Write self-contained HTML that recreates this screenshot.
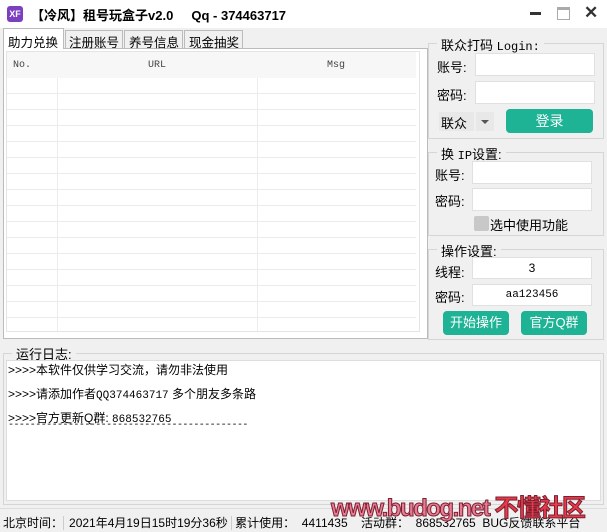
<!DOCTYPE html>
<html><head><meta charset="utf-8"><style>
*{margin:0;padding:0;box-sizing:border-box}
body{width:607px;height:532px;overflow:hidden;background:#f0f0f0;font-family:"Liberation Sans","Noto Sans CJK SC",sans-serif;font-size:12px;color:#000;position:relative}
.a{position:absolute}
.title{left:0;top:0;width:607px;height:28px;background:#fff}
.mono{font-family:"Liberation Mono","WenQuanYi Zen Hei",monospace}
.grp{border:1px solid #d5d5d5;position:absolute}
.leg{position:absolute;background:#f0f0f0;padding:0 4px;font-size:13px}
.inp{position:absolute;background:#fff;border:1px solid #e0e0e0}
.btn{position:absolute;background:#1db394;color:#fff;border-radius:4px;text-align:center;font-size:13px}
.lbl{position:absolute;font-size:13px}
.tab{position:absolute;top:30px;height:19px;background:#f0f0f0;border:1px solid #bbb;font-size:12.5px;padding:1px 0 0 3px;white-space:nowrap}
</style></head><body>
<div class="a title"></div>
<div class="a" style="left:7px;top:6px;width:16px;height:16px;background:#7b3fbf;border-radius:3px;color:#fff;font-size:9px;font-weight:bold;line-height:16px;text-align:center">XF</div>
<div class="a" style="left:31px;top:5px;font-size:13px;font-weight:bold">【冷风】租号玩盒子v2.0&nbsp;&nbsp;&nbsp;&nbsp;&nbsp;Qq - 374463717</div>
<div class="a" style="left:530px;top:12px;width:11px;height:3px;background:#333"></div>
<div class="a" style="left:557px;top:7px;width:13px;height:13px;border:1px solid #aaa;border-top:3px solid #aaa"></div>
<div class="a" style="left:584px;top:3px;font-size:17px;font-weight:bold;color:#333">✕</div>
<!-- tabs -->
<div class="a" style="left:3px;top:48px;width:425px;height:291px;background:#fff;border:1px solid #bbb"></div>
<div class="a" style="left:3px;top:28px;width:61px;height:21px;background:#fff;border:1px solid #bbb;border-bottom:none;font-size:12.5px;padding:3px 0 0 4px;white-space:nowrap">助力兑换</div>
<div class="tab" style="left:65px;width:58px">注册账号</div>
<div class="tab" style="left:124px;width:59px;padding-left:4px">养号信息</div>
<div class="tab" style="left:184px;width:59px;padding-left:4px">现金抽奖</div>
<div class="a" style="left:6px;top:51px;width:414px;height:281px;background:#fff;border:1px solid #e4e4e4"></div>
<div class="a" style="left:7px;top:52px;width:409px;height:26px;background:#f7f7f7"></div>
<div class="a mono" style="left:13px;top:60px;font-size:10px;color:#444">No.</div>
<div class="a mono" style="left:148px;top:60px;font-size:10px;color:#444">URL</div>
<div class="a mono" style="left:327px;top:60px;font-size:10px;color:#444">Msg</div>
<div class="a" style="left:57px;top:78px;width:1px;height:253px;background:#ececec"></div>
<div class="a" style="left:257px;top:78px;width:1px;height:253px;background:#ececec"></div>
<div class="a" style="left:7px;top:78px;width:409px;height:253px;background:repeating-linear-gradient(to bottom,transparent 0,transparent 15px,#ebebeb 15px,#ebebeb 16px)"></div>
<!-- right group1 -->
<div class="grp" style="left:428px;top:43px;width:176px;height:96px"></div>
<div class="leg" style="left:437px;top:35px">联众打码 <span class="mono" style="font-size:12px">Login:</span></div>
<div class="lbl" style="left:437px;top:57px">账号:</div>
<div class="inp" style="left:475px;top:53px;width:120px;height:23px"></div>
<div class="lbl" style="left:437px;top:85px">密码:</div>
<div class="inp" style="left:475px;top:81px;width:120px;height:23px"></div>
<div class="a" style="left:439px;top:112px;width:35px;height:19px;background:#e8e8e8;font-size:13px;padding:1px 2px">联众</div>
<div class="a" style="left:476px;top:112px;width:18px;height:19px;background:#e8e8e8"></div>
<div class="a" style="left:481px;top:120px;border:4px solid transparent;border-top:4px solid #555"></div>
<div class="btn" style="left:506px;top:109px;width:87px;height:24px;line-height:24px;font-size:14px">登录</div>
<!-- group2 -->
<div class="grp" style="left:428px;top:152px;width:176px;height:84px"></div>
<div class="leg" style="left:437px;top:144px">换 <span class="mono" style="font-size:12px">IP</span>设置:</div>
<div class="lbl" style="left:435px;top:165px">账号:</div>
<div class="inp" style="left:472px;top:161px;width:120px;height:23px"></div>
<div class="lbl" style="left:435px;top:191px">密码:</div>
<div class="inp" style="left:472px;top:188px;width:120px;height:23px"></div>
<div class="a" style="left:474px;top:216px;width:15px;height:15px;background:#c8c8c8;border-radius:2px"></div>
<div class="lbl" style="left:490px;top:215px">选中使用功能</div>
<!-- group3 -->
<div class="grp" style="left:428px;top:249px;width:176px;height:91px"></div>
<div class="leg" style="left:437px;top:241px">操作设置:</div>
<div class="lbl" style="left:435px;top:262px">线程:</div>
<div class="inp" style="left:472px;top:257px;width:120px;height:22px;text-align:center;line-height:20px;font-size:12px">3</div>
<div class="lbl" style="left:435px;top:287px">密码:</div>
<div class="inp mono" style="left:472px;top:284px;width:120px;height:22px;text-align:center;line-height:20px;font-size:11px">aa123456</div>
<div class="btn" style="left:443px;top:311px;width:66px;height:24px;line-height:24px">开始操作</div>
<div class="btn" style="left:521px;top:311px;width:66px;height:24px;line-height:24px">官方Q群</div>
<!-- log -->
<div class="grp" style="left:3px;top:353px;width:601px;height:152px"></div>
<div class="leg" style="left:12px;top:344px">运行日志:</div>
<div class="a" style="left:6px;top:360px;width:595px;height:141px;background:#fff;border:1px solid #ddd"></div>
<div class="a" style="left:8px;top:361px;font-size:12px">&gt;&gt;&gt;&gt;本软件仅供学习交流，请勿非法使用</div>
<div class="a" style="left:8px;top:385px;font-size:12px">&gt;&gt;&gt;&gt;请添加作者<span class="mono" style="font-size:11px">QQ374463717</span> 多个朋友多条路</div>
<div class="a" style="left:8px;top:409px;font-size:12px">&gt;&gt;&gt;&gt;官方更新Q群: <span class="mono" style="font-size:11px">868532765</span></div>
<div class="a mono" style="left:8px;top:420px;font-size:10px;letter-spacing:-0.55px">--------------------------------------------</div>
<!-- status -->
<div class="a" style="left:0;top:508px;width:607px;height:24px;background:#f0f0f0;border-top:1px solid #ddd"></div>
<div class="a" style="left:3px;top:514px;font-size:12px;white-space:nowrap">北京时间：<span style="border-left:1px solid #ccc;padding-left:5px">2021年4月19日15时19分36秒</span> <span style="border-left:1px solid #ccc;padding-left:3px">累计使用：</span>&nbsp;&nbsp;4411435 &nbsp;&nbsp; 活动群： &nbsp;868532765 &nbsp;BUG反馈联系平台</div>
<div class="a" style="left:331px;top:488px;font-size:24px;font-weight:bold;color:#ea7b95;-webkit-text-stroke:1px #7a2030;white-space:nowrap;letter-spacing:-1.5px">www.budog.net <span style="color:#e83a4a">不懂社区</span></div>
</body></html>
